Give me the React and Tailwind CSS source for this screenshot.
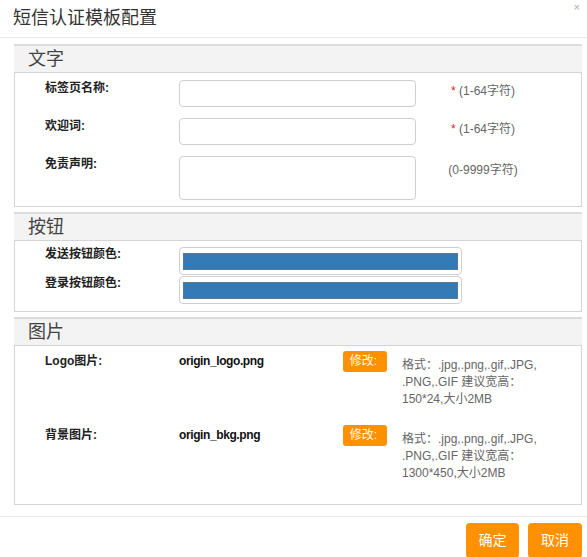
const FONT = "font-['Liberation_Sans','Noto_Sans_CJK_SC',sans-serif]";

function Section({ title, children, className = "" }) {
  return (
    <div className={`mx-[5px] ml-[14px] ${className}`}>
      <div className="h-[28px] border-t-2 border-[#dcdcdc] bg-[#f3f3f3] pl-[14px] text-[18px] leading-[26px] text-[#444]">
        {title}
      </div>
      <div className="border border-[#d4d4d4] bg-white">{children}</div>
    </div>
  );
}

function Label({ children }) {
  return (
    <div className="w-[134px] shrink-0 text-[12px] font-bold leading-[17px] text-[#222]">{children}</div>
  );
}

function Hint({ star, tall, children }) {
  return (
    <div
      className={`ml-[2px] w-[130px] text-center text-[12px] leading-[17px] text-[#666] ${tall ? "pt-[6px]" : "pt-[3px]"}`}
    >
      {star && <span className="text-[#d9251d]">* </span>}
      {children}
    </div>
  );
}

function TextRow({ label, tall, star, hint }) {
  return (
    <div className="flex">
      <Label>{label}</Label>
      <div
        className={`w-[237px] shrink-0 rounded-[4px] border border-[#cfcfcf] bg-white ${tall ? "h-[44px]" : "h-[27px]"}`}
      />
      <Hint star={star} tall={tall}>
        {hint}
      </Hint>
    </div>
  );
}

function ColorRow({ label }) {
  return (
    <div className="flex">
      <div className="-mt-[1px]">
        <Label>{label}</Label>
      </div>
      <div className="h-[28px] w-[283px] rounded-[4px] border border-[#d0d0d0] bg-white px-[3px] pt-[5px]">
        <div className="h-[17px] border border-[#5d7891] bg-[#337ab7]" />
      </div>
    </div>
  );
}

function ImageRow({ label, file, size }) {
  return (
    <div className="flex h-[74px]">
      <div className="pt-[2px]">
        <Label>{label}</Label>
      </div>
      <div className="w-[164px] shrink-0 pt-[2px] text-[12px] font-bold leading-[17px] tracking-[-0.4px] text-[#111]">
        {file}
      </div>
      <button className="h-[21px] w-[44px] shrink-0 rounded-[3px] bg-[#ff9000] pr-[3px] text-[12px] leading-[21px] text-[#fff8ea]">
        修改:
      </button>
      <div className="ml-[15px] pt-[6px] text-[12px] leading-[17px] text-[#666]">
        <div>格式：.jpg,.png,.gif,.JPG,</div>
        <div>.PNG,.GIF 建议宽高：</div>
        <div>{size},大小2MB</div>
      </div>
    </div>
  );
}

export default function App() {
  return (
    <div className={`relative h-[557px] w-[587px] overflow-hidden bg-white ${FONT}`}>
      <div className="flex h-[38px] items-center border-b border-[#e8e8e8] pl-[13px] text-[18px] text-[#333]">
        短信认证模板配置
      </div>
      <span className="absolute right-[7px] top-[0px] text-[11px] leading-[14px] text-[#aaa]">×</span>

      <Section title="文字" className="mt-[6px]">
        <div className="flex flex-col gap-[12px] pb-[6px] pl-[30px] pt-[7px]">
          <TextRow label="标签页名称:" star hint="(1-64字符)" />
          <div className="-mt-[1px]">
            <TextRow label="欢迎词:" star hint="(1-64字符)" />
          </div>
          <div className="-mt-[1px]">
            <TextRow label="免责声明:" tall hint="(0-9999字符)" />
          </div>
        </div>
      </Section>

      <Section title="按钮" className="mt-[5px]">
        <div className="flex flex-col gap-[1px] pb-[7px] pl-[30px] pt-[6px]">
          <ColorRow label="发送按钮颜色:" />
          <ColorRow label="登录按钮颜色:" />
        </div>
      </Section>

      <Section title="图片" className="mt-[5px]">
        <div className="pb-[5px] pl-[30px] pt-[5px]">
          <ImageRow label="Logo图片:" file="origin_logo.png" size="150*24" />
          <ImageRow label="背景图片:" file="origin_bkg.png" size="1300*450" />
        </div>
      </Section>

      <div className="mt-[11px] flex justify-end gap-[9px] border-t border-[#e8e8e8] pr-[5px] pt-[6px]">
        <button className="h-[35px] w-[53px] rounded-[4px] bg-[#ff9000] text-[14px] text-white">确定</button>
        <button className="h-[35px] w-[54px] rounded-[4px] bg-[#ff9000] text-[14px] text-white">取消</button>
      </div>
    </div>
  );
}
